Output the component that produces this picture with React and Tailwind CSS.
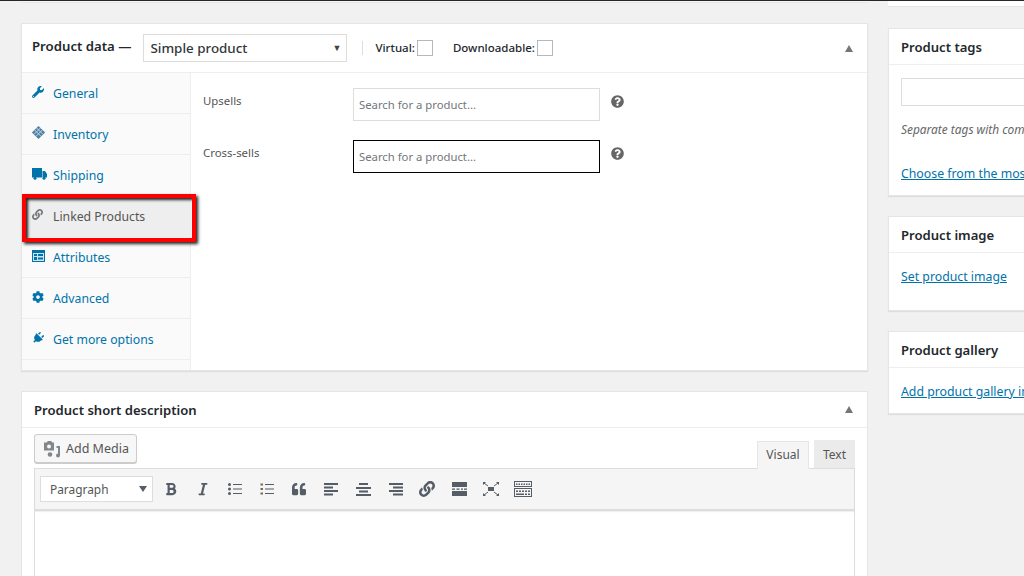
import React from "react";
import { FaWrench, FaLink, FaCog, FaPlug, FaQuestionCircle, FaBold, FaItalic, FaQuoteLeft } from "react-icons/fa";

const font = { fontFamily: '"Noto Sans", "Open Sans", sans-serif' };

const InventoryIcon = () => (
  <svg width="13" height="13" viewBox="0 0 14 14" className="rotate-45">
    <rect x="2" y="2" width="10" height="10" fill="#4d7fa3" />
    <path d="M2 5h10M2 8h10M5 2v10M8 2v10" stroke="#cfe0ec" strokeWidth="0.9" />
  </svg>
);
const TruckIcon = () => (
  <svg width="15" height="12" viewBox="0 0 15 12" fill="#0073aa">
    <rect x="0" y="0" width="10" height="9.500" />
    <path d="M10.500 3H13l2 3v3.500h-4.500z" />
    <circle cx="3" cy="10.300" r="1.500" />
    <circle cx="12" cy="10.300" r="1.500" />
  </svg>
);
const AttrIcon = () => (
  <svg width="13" height="12" viewBox="0 0 13 12">
    <rect width="13" height="12" fill="#0073aa" />
    <rect x="1" y="3" width="11" height="8" fill="#cfe3ee" />
    <rect x="2" y="4" width="3" height="2" fill="#0073aa" />
    <rect x="6" y="4" width="5" height="2" fill="#0073aa" />
    <rect x="2" y="7" width="3" height="3" fill="#0073aa" />
    <rect x="6" y="7.500" width="5" height="2" fill="#0073aa" />
  </svg>
);
const Bars = ({ rows }) => (
  <svg width="15" height="14" viewBox="0 0 15 14" fill="#555d66">
    {rows.map((r, i) => (
      <rect key={i} x={r[0]} y={r[1]} width={r[2]} height={r[3] || 2} />
    ))}
  </svg>
);
const ListIcon = ({ numbered }) => (
  <svg width="14" height="13" viewBox="0 0 14 13" fill="#555d66">
    {[1, 5.5, 10].map((y) =>
      numbered ? (
        <rect key={y} x="0.500" y={y - 0.5} width="2.500" height="2" fill="#7a6a55" />
      ) : (
        <circle key={y} cx="1.500" cy={y + 0.5} r="1.500" />
      )
    )}
    {[1, 5.5, 10].map((y) => (
      <rect key={"l" + y} x="5" y={y} width="9" height="1" />
    ))}
  </svg>
);
const MoreIcon = () => (
  <svg width="15" height="14" viewBox="0 0 15 14" fill="#555d66">
    <rect width="15" height="5" />
    <rect y="6.500" width="3" height="1.300" />
    <rect x="4.500" y="6.500" width="3" height="1.300" />
    <rect x="9" y="6.500" width="2" height="1.300" />
    <rect x="12" y="6.500" width="3" height="1.300" />
    <rect y="9" width="15" height="5" />
  </svg>
);
const FullIcon = () => (
  <svg width="16" height="14" viewBox="0 0 16 14" fill="#555d66" stroke="#555d66">
    <rect x="5" y="5" width="6" height="4" stroke="none" />
    <path d="M1 1l4 3M15 1l-4 3M1 13l4-3M15 13l-4-3" strokeWidth="1" />
    <path d="M0 0h3L0 3zM16 0h-3l3 3zM0 14h3l-3-3zM16 14h-3l3-3z" stroke="none" />
  </svg>
);
const SinkIcon = () => (
  <svg width="18" height="16" viewBox="0 0 18 16" fill="#555d66">
    <path d="M0 0h18v6H0zM1 1v4h16V1zM0 7h18v9H0zM1 8v7h16V8z" fillRule="evenodd" />
    <path d="M2 2.500h1.500V4H2zM4.500 2.500H6V4H4.500zM7 2.500h1.500V4H7zM9.500 2.500H11V4H9.500zM12 2.500h1.500V4H12zM14.500 2.500H16V4h-1.500zM2 9.500h2v1.500H2zM5 9.500h2v1.500H5zM8 9.500h2v1.500H8zM11 9.500h2v1.500h-2zM14 9.500h2v1.500h-2zM2 12.500h8V14H2zM11 12.500h2V14h-2zM14 12.500h2V14h-2z" />
  </svg>
);
const MediaIcon = () => (
  <svg width="18" height="18" viewBox="0 0 18 18" fill="#82878c">
    <path d="M1 2.500h2.500L5 1h3l1.500 1.500H11v8H1z" />
    <circle cx="6" cy="6.500" r="2" fill="#f7f7f7" />
    <circle cx="7" cy="14.500" r="2.300" />
    <path d="M13.500 6H17v9.500a2 2 0 1 1-2-2V8h-1.500z" />
  </svg>
);
const Caret = () => <span className="block w-0 h-0 border-x-[4.5px] border-x-transparent border-b-[7px] border-b-[#72777c]" />;

const tabs = [
  ["General", <FaWrench size={12} color="#0073aa" />],
  ["Inventory", <InventoryIcon />],
  ["Shipping", <TruckIcon />],
  ["Linked Products", <FaLink size={11} color="#72777c" />],
  ["Attributes", <AttrIcon />],
  ["Advanced", <FaCog size={12} color="#0073aa" />],
  ["Get more options", <FaPlug size={12} color="#0073aa" className="rotate-45" />],
];

const Tab = ({ label, icon }) => {
  const active = label === "Linked Products";
  return (
    <div className={`h-[41px] flex items-center border-b border-[#eeeeee] ${active ? "bg-[#eeeeee]" : ""}`}>
      <span className="w-[31px] pl-[10px] flex justify-start items-center -mt-[3px]">{icon}</span>
      <span className={`text-[12.250px] pt-[2px] ${active ? "text-[#555555]" : "text-[#0073aa]"}`}>{label}</span>
    </div>
  );
};

const Field = ({ label, focus }) => (
  <div className="flex h-[33px] items-start">
    <span className="w-[150px] text-[11.400px] text-[#555555] mt-[4px]">{label}</span>
    <div className={`w-[247px] h-[33px] flex items-center pl-[5px] pt-[2px] text-[11.300px] text-[#72777c] bg-white border ${focus ? "border-black" : "border-[#dddddd]"}`}>
      Search for a product...
    </div>
    <FaQuestionCircle size={13} color="#666666" className="ml-[11px] mt-[7px]" />
  </div>
);

const SideBox = ({ title, className, children }) => (
  <div className={`w-[200px] bg-white border border-[#e5e5e5] shadow-[0_1px_1px_rgba(0,0,0,0.08)] ${className}`}>
    <div className="h-[36px] pl-[12px] pt-[2px] border-b border-[#eeeeee] flex items-center text-[13.100px] font-semibold text-[#23282d] whitespace-nowrap">{title}</div>
    <div className="px-[12px] text-[12.300px] whitespace-nowrap overflow-hidden">{children}</div>
  </div>
);

export default function App() {
  return (
    <div style={font} className="relative w-[1024px] h-[576px] overflow-hidden bg-[#f1f1f1] flex items-start">
      <div className="absolute inset-x-0 top-0 h-[1px] bg-[#23282d]" />

      <div className="w-[888px] shrink-0 pl-[21px]">
        <div className="w-[847px] h-[3px] bg-[#f7f7f7] border-b border-[#e5e5e5]" />

        <div className="relative w-[847px] mt-[20px] h-[348px] bg-white border border-[#e5e5e5] shadow-[0_1px_1px_rgba(0,0,0,0.08)]">
          <div className="h-[49px] flex items-center border-b border-[#eeeeee] pl-[10px] pr-[14px]">
            <span className="text-[13.200px] font-semibold text-[#23282d] whitespace-nowrap -mt-[2px]">Product data —</span>
            <div className="ml-[12px] w-[204px] h-[28px] border border-[#dddddd] flex items-center justify-between pl-[6px] pr-[5px] text-[13.400px] font-medium text-[#32373c]">
              Simple product
              <span className="text-[9px] text-[#444444]">▼</span>
            </div>
            <span className="ml-[15px] w-px h-[14px] bg-[#dddddd]" />
            <span className="ml-[12px] text-[11.500px] font-medium text-[#23282d]">Virtual:</span>
            <span className="ml-[2px] w-[16px] h-[16px] border border-[#b4b9be] bg-white" />
            <span className="ml-[20px] text-[11.500px] font-medium text-[#23282d]">Downloadable:</span>
            <span className="ml-[2px] w-[16px] h-[16px] border border-[#b4b9be] bg-white" />
            <span className="ml-auto"><Caret /></span>
          </div>
          <div className="flex h-[297px]">
            <div className="w-[169px] bg-[#fafafa] border-r border-[#eeeeee]">
              {tabs.map(([l, i]) => (
                <Tab key={l} label={l} icon={i} />
              ))}
            </div>
            <div className="pl-[12px] pt-[15px] flex flex-col gap-[19px]">
              <Field label="Upsells" />
              <Field label="Cross-sells" focus />
            </div>
          </div>
          <div className="absolute left-[0px] top-[170px] w-[174px] h-[48px] border-[4.5px] border-[#ff0000] shadow-[2px_2px_3px_#222,inset_2px_2px_3px_#222]" />
        </div>

        <div className="w-[847px] mt-[20px] h-[300px] bg-white border border-[#e5e5e5]">
          <div className="h-[36px] flex items-center justify-between border-b border-[#eeeeee] pl-[12px] pr-[14px]">
            <span className="text-[13.100px] font-semibold text-[#23282d] pt-[2px]">Product short description</span>
            <Caret />
          </div>
          <div className="px-[12px] relative">
            <div className="flex items-end justify-between h-[40px]">
              <div className="self-start mt-[6px] w-[103px] h-[29px] border border-[#cccccc] rounded-[3px] bg-[#f7f7f7] shadow-[0_1px_0_#cccccc] flex items-center pl-[8px] gap-[5px] text-[12.500px] text-[#555555]">
                <MediaIcon />
                <span className="pt-[2px]">Add Media</span>
              </div>
              <div className="flex items-end gap-[5px]">
                <div className="w-[52px] h-[28px] -mb-px relative bg-[#f5f5f5] border border-[#e5e5e5] border-b-[#f5f5f5] flex items-center justify-center text-[12px] text-[#555555]">Visual</div>
                <div className="w-[41px] h-[28px] bg-[#ebebeb] flex items-center justify-center text-[12px] pt-[2px] text-[#555555]">Text</div>
              </div>
            </div>
            <div className="border border-[#dddddd] h-[300px] bg-white">
              <div className="h-[42px] bg-[#f5f5f5] border-b-2 border-[#dddddd] shadow-[0_1px_1px_rgba(0,0,0,0.06)] flex items-center pl-[5px]">
                <div className="w-[113px] h-[26px] bg-white border border-[#dddddd] flex items-center justify-between pl-[9px] pr-[5px] text-[11.900px] text-[#555555]">
                  <span className="pt-[2px]">Paragraph</span>
                  <span className="w-0 h-0 border-x-[4px] border-x-transparent border-t-[6px] border-t-[#555d66]" />
                </div>
                <div className="flex items-center">
                  <span className="w-[32px] ml-[2px] flex justify-center"><FaBold size={14} color="#555d66" /></span>
                  <span className="w-[32px] flex justify-center"><FaItalic size={14} color="#555d66" /></span>
                  <span className="w-[32px] flex justify-center"><ListIcon /></span>
                  <span className="w-[32px] flex justify-center"><ListIcon numbered /></span>
                  <span className="w-[32px] flex justify-center"><FaQuoteLeft size={14} color="#555d66" /></span>
                  <span className="w-[32px] flex justify-center"><Bars rows={[[0, 1, 14], [0, 4.5, 9], [0, 8, 14], [0, 11.5, 9]]} /></span>
                  <span className="w-[32px] flex justify-center"><Bars rows={[[3, 1, 9], [0, 5, 15], [3, 8.5, 9], [0, 12, 15]]} /></span>
                  <span className="w-[32px] flex justify-center"><Bars rows={[[1, 1, 14], [5, 4.5, 10], [1, 8, 14], [5, 11.5, 10]]} /></span>
                  <span className="w-[32px] flex justify-center"><FaLink size={16} color="#555d66" /></span>
                  <span className="w-[32px] flex justify-center"><MoreIcon /></span>
                  <span className="w-[32px] flex justify-center"><FullIcon /></span>
                  <span className="w-[32px] flex justify-center"><SinkIcon /></span>
                </div>
              </div>
            </div>
          </div>
        </div>
      </div>

      <div className="w-[136px] shrink-0">
        <div className="w-[200px] h-[7px] bg-white border-b border-[#e5e5e5]" />
        <SideBox title="Product tags" className="mt-[21px] h-[168px]">
          <div className="mt-[13px] w-[200px] h-[28px] border border-[#dddddd]" />
          <p className="mt-[15px] italic text-[11.900px] text-[#666666]">Separate tags with commas</p>
          <p className="mt-[26px] text-[#0073aa] underline">Choose from the most used tags</p>
        </SideBox>
        <SideBox title="Product image" className="mt-[20px] h-[95px]">
          <p className="mt-[15px] text-[#0073aa] underline">Set product image</p>
        </SideBox>
        <SideBox title="Product gallery" className="mt-[20px] h-[83px]">
          <p className="mt-[15px] text-[#0073aa] underline">Add product gallery images</p>
        </SideBox>
      </div>
    </div>
  );
}
